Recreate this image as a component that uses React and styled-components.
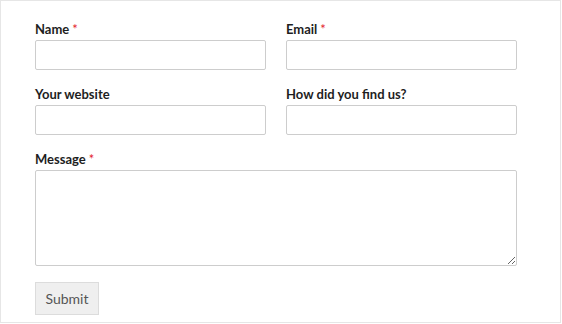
import React from 'react'
import styled, { createGlobalStyle } from 'styled-components'

const GlobalStyle = createGlobalStyle`
  html, body {
    margin: 0;
    padding: 0;
    background: #ffffff;
  }
  body {
    font-family: Lato, "Liberation Sans", sans-serif;
    color: #1e1e1e;
  }
`

const Frame = styled.div`
  box-sizing: border-box;
  width: 561px;
  height: 323px;
  border: 1px solid #e6e6e6;
  background: #fff;
  padding: 20px 0 0 34px;
`

const Form = styled.form`
  width: 482px;
`

const Row = styled.div`
  display: grid;
  grid-template-columns: ${props => (props.full ? '1fr' : '1fr 1fr')};
  column-gap: 20px;
`

const Field = styled.div`
  margin-bottom: 16px;
`

const Label = styled.label`
  display: block;
  font-size: 13px;
  line-height: 16px;
  font-weight: 700;
  color: #1e1e1e;
  margin-bottom: 3px;
`

const Required = styled.span`
  color: #e3222b;
  font-weight: 400;
  margin-left: 3px;
`

const Input = styled.input`
  box-sizing: border-box;
  display: block;
  width: 100%;
  height: 30px;
  margin: 0;
  padding: 4px 8px;
  border: 1px solid #cdcdcd;
  border-radius: 2px;
  background: #fff;
  font-family: inherit;
  font-size: 14px;
  outline: none;
`

const TextArea = styled.textarea`
  box-sizing: border-box;
  display: block;
  width: 100%;
  height: 96px;
  margin: 0;
  padding: 6px 8px;
  border: 1px solid #cdcdcd;
  border-radius: 2px;
  background: #fff;
  font-family: inherit;
  font-size: 14px;
  outline: none;
  resize: vertical;
`

const SubmitButton = styled.button`
  box-sizing: border-box;
  display: block;
  width: 64px;
  height: 33px;
  padding: 0;
  border: 1px solid #dcdcdc;
  border-radius: 0;
  background: #efefef;
  color: #555;
  font-family: inherit;
  font-size: 14px;
  cursor: pointer;
`

const fields = [
  [
    { id: 'name', label: 'Name', required: true },
    { id: 'email', label: 'Email', required: true },
  ],
  [
    { id: 'website', label: 'Your website' },
    { id: 'source', label: 'How did you find us?' },
  ],
]

export default function App() {
  return (
    <>
      <GlobalStyle />
      <Frame>
        <Form onSubmit={e => e.preventDefault()}>
          {fields.map((row, i) => (
            <Row key={i}>
              {row.map(f => (
                <Field key={f.id}>
                  <Label htmlFor={f.id}>
                    {f.label}
                    {f.required && <Required>*</Required>}
                  </Label>
                  <Input id={f.id} type="text" />
                </Field>
              ))}
            </Row>
          ))}
          <Row full>
            <Field>
              <Label htmlFor="message">
                Message
                <Required>*</Required>
              </Label>
              <TextArea id="message" />
            </Field>
          </Row>
          <SubmitButton type="submit">Submit</SubmitButton>
        </Form>
      </Frame>
    </>
  )
}
